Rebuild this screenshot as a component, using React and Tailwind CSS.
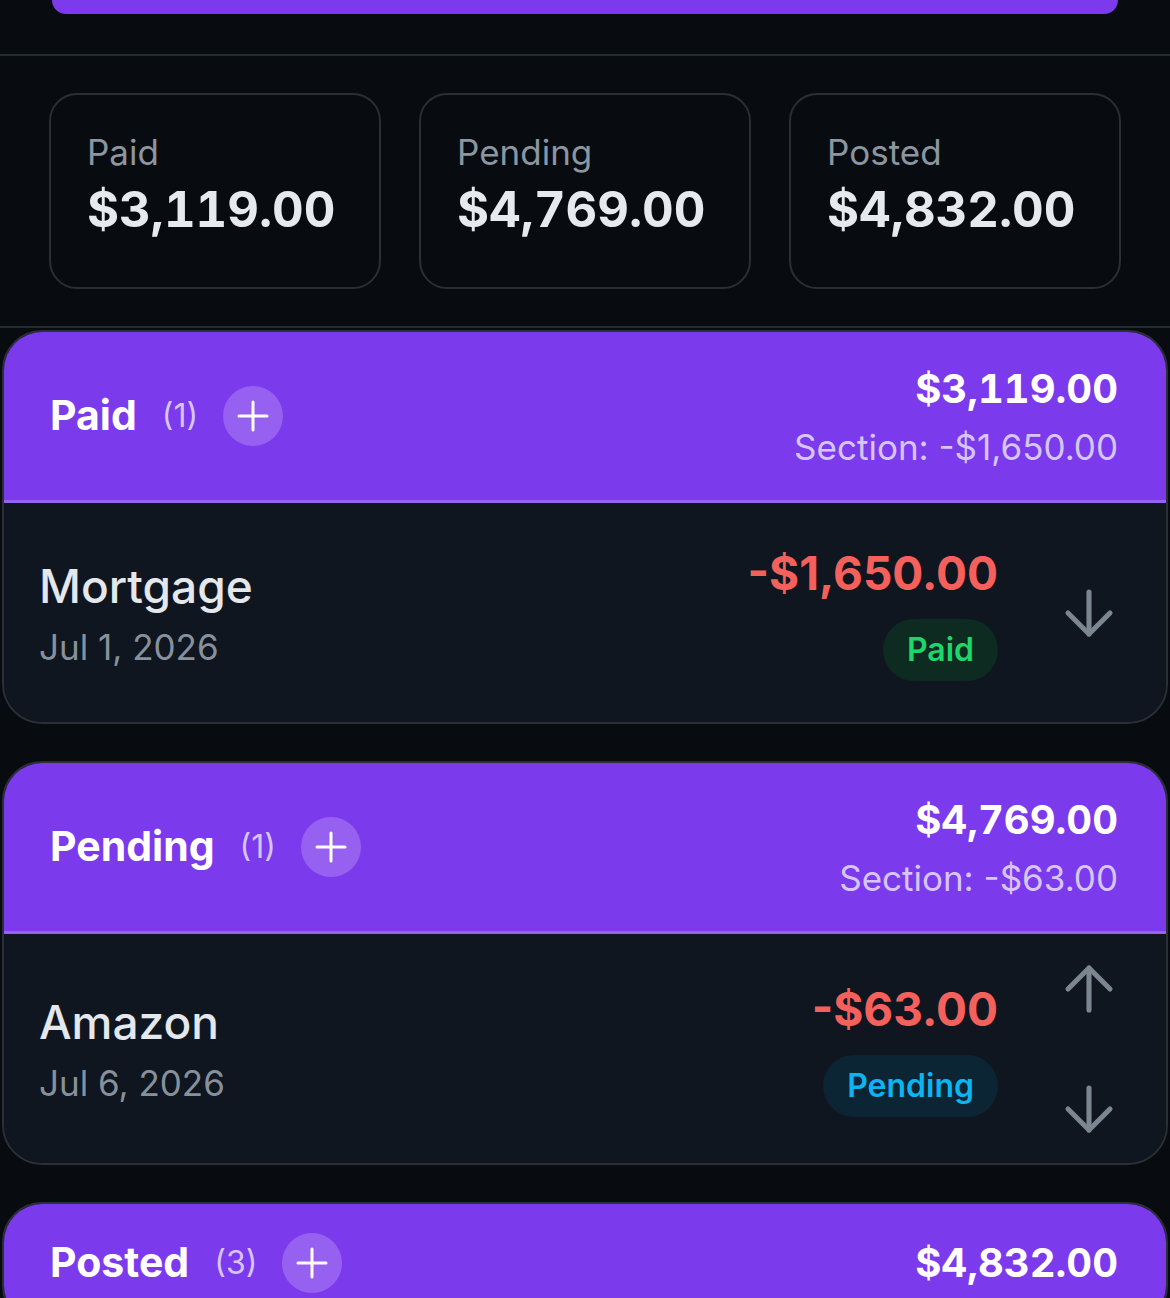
import { ArrowDown, ArrowUp, Plus } from "lucide-react";

const stats = [
  { label: "Paid", value: "$3,119.00" },
  { label: "Pending", value: "$4,769.00" },
  { label: "Posted", value: "$4,832.00" },
];

const badgeStyles = {
  Paid: "bg-[#0d2b21] text-[#1fd66b]",
  Pending: "bg-[#0b2535] text-[#0cb4f1]",
};

const sections = [
  {
    title: "Paid",
    count: 1,
    total: "$3,119.00",
    sectionTotal: "-$1,650.00",
    items: [
      {
        name: "Mortgage",
        date: "Jul 1, 2026",
        amount: "-$1,650.00",
        status: "Paid",
        up: false,
        down: true,
      },
    ],
  },
  {
    title: "Pending",
    count: 1,
    total: "$4,769.00",
    sectionTotal: "-$63.00",
    items: [
      {
        name: "Amazon",
        date: "Jul 6, 2026",
        amount: "-$63.00",
        status: "Pending",
        up: true,
        down: true,
      },
    ],
  },
  {
    title: "Posted",
    count: 3,
    total: "$4,832.00",
    sectionTotal: null,
    items: [],
  },
];

const ArrowButton = ({ dir }) => (
  <button
    type="button"
    className="flex h-[72px] w-[72px] items-center justify-center text-[#7b8690]"
  >
    {dir === "up" ? (
      <ArrowUp size={72} strokeWidth={1.7} />
    ) : (
      <ArrowDown size={72} strokeWidth={1.7} />
    )}
  </button>
);

const TransactionRow = ({ item }) => (
  <div
    className={`flex items-center justify-between bg-[#0f1620] pl-[35px] pr-[41px] ${
      item.up ? "min-h-[229px]" : "min-h-[219px]"
    }`}
  >
    <div>
      <div className="text-[46px] font-medium leading-[56px] text-[#e4e7eb]">
        {item.name}
      </div>
      <div className="mt-[12px] text-[35px] leading-[42px] text-[#87919c]">
        {item.date}
      </div>
    </div>

    <div className="flex items-center gap-[55px]">
      <div className="flex flex-col items-end">
        <div className="text-[46px] font-bold leading-[56px] text-[#f4605c]">
          {item.amount}
        </div>
        <span
          className={`mt-[18px] rounded-full px-[24px] py-[10px] text-[32px] font-semibold leading-[42px] ${
            badgeStyles[item.status]
          }`}
        >
          {item.status}
        </span>
      </div>
      <div className="flex flex-col gap-[48px]">
        {item.up && <ArrowButton dir="up" />}
        {item.down && <ArrowButton dir="down" />}
      </div>
    </div>
  </div>
);

const Section = ({ section }) => (
  <div className="overflow-hidden rounded-[40px] border-2 border-[#2b3037] bg-[#0f1620]">
    <div
      className={`flex items-center justify-between border-b-[3px] border-[#9562f1] bg-[#7c3aed] pl-[46px] pr-[48px] ${
        section.sectionTotal ? "h-[171px]" : "h-[120px]"
      }`}
    >
      <div className="flex items-center">
        <h2 className="text-[41px] font-bold text-white">{section.title}</h2>
        <span className="ml-[25px] text-[32px] text-[#d7c6fb]">
          ({section.count})
        </span>
        <button
          type="button"
          className="ml-[25px] flex h-[60px] w-[60px] items-center justify-center rounded-full bg-white/20 text-white"
        >
          <Plus size={48} strokeWidth={1.5} />
        </button>
      </div>
      <div className="text-right">
        <div className="text-[40px] font-bold leading-[50px] tabular-nums text-white">
          {section.total}
        </div>
        {section.sectionTotal && (
          <div className="mt-[12px] text-[35px] leading-[42px] text-[#d7c6fb]">
            Section: {section.sectionTotal}
          </div>
        )}
      </div>
    </div>
    {section.items.map((item) => (
      <TransactionRow key={item.name} item={item} />
    ))}
  </div>
);

export default function App() {
  return (
    <div className="min-h-screen bg-[#080c11] font-['Inter','Noto_Sans',sans-serif]">
      <div className="border-b-2 border-[#262b31] px-[52px] pb-[40px]">
        <button
          type="button"
          className="block h-[14px] w-full rounded-b-[18px] bg-[#7c3aed]"
        />
      </div>

      <div className="grid grid-cols-3 gap-[38px] border-b-2 border-[#262b31] px-[49px] pt-[37px] pb-[37px]">
        {stats.map((s) => (
          <div
            key={s.label}
            className="h-[196px] rounded-[28px] border-2 border-[#2a2f35] px-[36px] pt-[37px]"
          >
            <div className="text-[35px] leading-[40px] text-[#8b96a1]">
              {s.label}
            </div>
            <div className="mt-[10px] text-[49px] font-bold leading-[56px] tabular-nums text-[#e6e9ed]">
              {s.value}
            </div>
          </div>
        ))}
      </div>

      <div className="flex flex-col gap-[37px] px-[2px] pt-[2px]">
        {sections.map((section) => (
          <Section key={section.title} section={section} />
        ))}
      </div>
    </div>
  );
}
